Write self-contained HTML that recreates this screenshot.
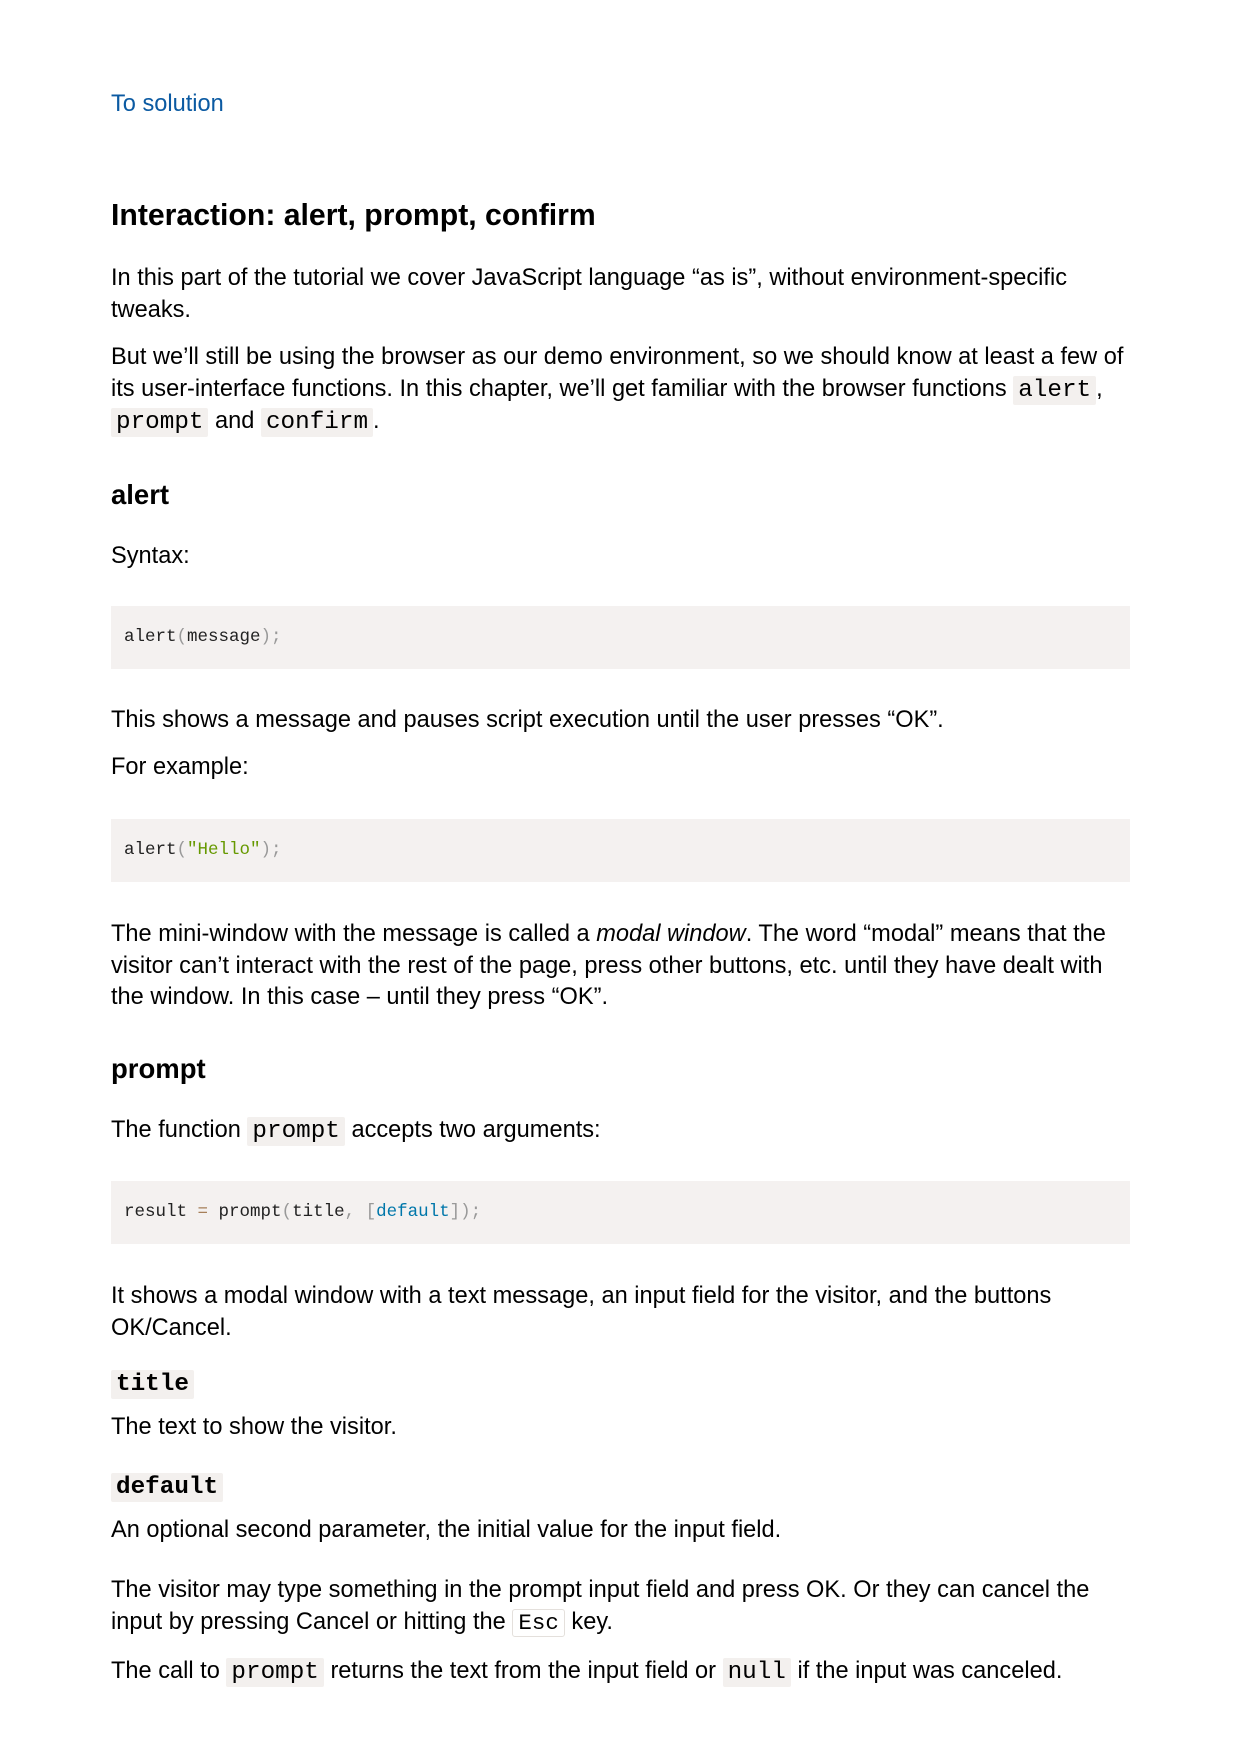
<!DOCTYPE html>
<html><head><meta charset="utf-8"><style>
html,body{margin:0;padding:0;background:#fff;width:1240px;height:1754px;overflow:hidden}
body{font-family:"Liberation Sans",Arial,sans-serif;color:#000;font-size:23.6px;position:relative}
.b{position:absolute;left:111px;width:1100px;line-height:31.5px;white-space:nowrap}
code{font-family:"Liberation Mono",monospace;font-size:24.3px;background:#f3f0ee;padding:1px 5px;border-radius:2px}
.kbd{font-family:"Liberation Mono",monospace;font-size:22.5px;border:1px solid #e4e0dc;padding:0 5px;border-radius:3px}
.pre{position:absolute;left:111px;width:1019px;height:63px;background:#f4f1f0;font-family:"Liberation Mono",monospace;font-size:17.5px;line-height:63px;padding-left:13px;box-sizing:border-box;color:#222}
.g{color:#999}.s{color:#690}.k{color:#07a}.o{color:#a67f59}
.dt code{font-weight:bold;font-size:24.3px}
</style></head><body>
<div class="b" style="top:89px;color:#0b5aa2">To solution</div>
<div class="b" style="top:200px;font-size:30.2px;font-weight:bold">Interaction: alert, prompt, confirm</div>
<div class="b" style="top:263px">In this part of the tutorial we cover JavaScript language “as is”, without environment-specific<br>tweaks.</div>
<div class="b" style="top:342px">But we’ll still be using the browser as our demo environment, so we should know at least a few of<br>its user-interface functions. In this chapter, we’ll get familiar with the browser functions <code>alert</code>,<br><code>prompt</code> and <code>confirm</code>.</div>
<div class="b" style="top:479px;font-size:27.5px;font-weight:bold">alert</div>
<div class="b" style="top:541px">Syntax:</div>
<div class="pre" style="top:606px">alert<span class="g">(</span>message<span class="g">);</span></div>
<div class="b" style="top:705px">This shows a message and pauses script execution until the user presses “OK”.</div>
<div class="b" style="top:752px">For example:</div>
<div class="pre" style="top:819px">alert<span class="g">(</span><span class="s">"Hello"</span><span class="g">);</span></div>
<div class="b" style="top:919px">The mini-window with the message is called a <i>modal window</i>. The word “modal” means that the<br>visitor can’t interact with the rest of the page, press other buttons, etc. until they have dealt with<br>the window. In this case – until they press “OK”.</div>
<div class="b" style="top:1053px;font-size:27.5px;font-weight:bold">prompt</div>
<div class="b" style="top:1115px">The function <code>prompt</code> accepts two arguments:</div>
<div class="pre" style="top:1181px">result <span class="o">=</span> prompt<span class="g">(</span>title<span class="g">,</span> <span class="g">[</span><span class="k">default</span><span class="g">]);</span></div>
<div class="b" style="top:1281px">It shows a modal window with a text message, an input field for the visitor, and the buttons<br>OK/Cancel.</div>
<div class="b dt" style="top:1368px"><code>title</code></div>
<div class="b" style="top:1412px">The text to show the visitor.</div>
<div class="b dt" style="top:1471px"><code>default</code></div>
<div class="b" style="top:1515px">An optional second parameter, the initial value for the input field.</div>
<div class="b" style="top:1575px">The visitor may type something in the prompt input field and press OK. Or they can cancel the<br>input by pressing Cancel or hitting the <span class="kbd">Esc</span> key.</div>
<div class="b" style="top:1656px">The call to <code>prompt</code> returns the text from the input field or <code>null</code> if the input was canceled.</div>
</body></html>
